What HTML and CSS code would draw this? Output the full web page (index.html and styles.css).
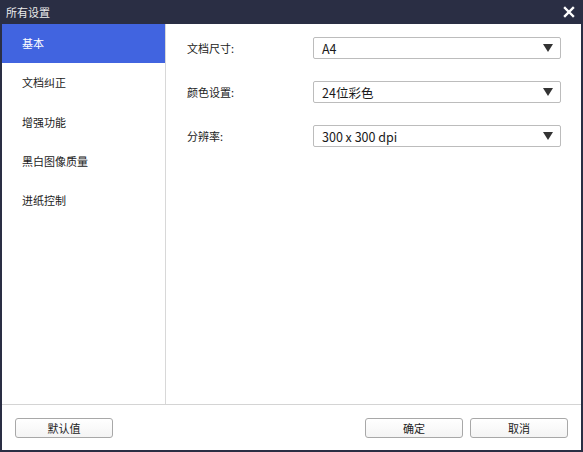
FILE: index.html
```html
<!DOCTYPE html>
<html lang="zh">
<head>
<meta charset="utf-8">
<title>所有设置</title>
<link rel="stylesheet" href="styles.css">
</head>
<body>
<div class="window">
  <div class="titlebar">
    <span class="title">所有设置</span>
    <svg class="close" width="12" height="12" viewBox="0 0 12 12"><path d="M2 2 L10 10 M10 2 L2 10" stroke="#ffffff" stroke-width="2.4" stroke-linecap="square"/></svg>
  </div>
  <div class="body">
    <div class="sidebar">
      <div class="item active">基本</div>
      <div class="item">文档纠正</div>
      <div class="item">增强功能</div>
      <div class="item">黑白图像质量</div>
      <div class="item">进纸控制</div>
    </div>
    <div class="main">
      <div class="row">
        <span class="label">文档尺寸:</span>
        <div class="select"><span>A4</span><span class="arrow"></span></div>
      </div>
      <div class="row">
        <span class="label">颜色设置:</span>
        <div class="select"><span>24位彩色</span><span class="arrow"></span></div>
      </div>
      <div class="row">
        <span class="label">分辨率:</span>
        <div class="select"><span>300 x 300 dpi</span><span class="arrow"></span></div>
      </div>
    </div>
  </div>
  <div class="footer">
    <button class="btn">默认值</button>
    <div class="spacer"></div>
    <button class="btn">确定</button>
    <button class="btn">取消</button>
  </div>
</div>
</body>
</html>
```
FILE: styles.css
```css
html, body {
  margin: 0;
  padding: 0;
  background: #ffffff;
}
body {
  font-family: "Noto Sans CJK SC", "Noto Sans", sans-serif;
  font-size: 11px;
  color: #222222;
}
.window {
  width: 583px;
  height: 452px;
  box-sizing: border-box;
  border: 2px solid #2a2e44;
  border-top: none;
  display: flex;
  flex-direction: column;
  background: #ffffff;
}
.titlebar {
  height: 24px;
  margin: 0 -2px;
  background: #2a2e44;
  display: flex;
  align-items: center;
  padding: 0 8px 0 6px;
  flex: none;
}
.title {
  color: #ececec;
  font-size: 11px;
  flex: 1;
}
.close {
  display: block;
}
.body {
  height: 380px;
  display: flex;
  border-bottom: 1px solid #d4d4d4;
  flex: none;
}
.sidebar {
  width: 163px;
  border-right: 1px solid #d8d8d8;
  flex: none;
}
.item {
  height: 39.3px;
  line-height: 39.3px;
  padding-left: 20px;
  color: #222222;
}
.item.active {
  background: #4164e0;
  color: #ffffff;
}
.main {
  flex: 1;
  padding: 13px 20px 0 21px;
  display: flex;
  flex-direction: column;
  gap: 22px;
}
.row {
  display: flex;
  align-items: center;
  height: 22px;
}
.label {
  width: 126px;
  flex: none;
}
.select {
  flex: 1;
  height: 22px;
  box-sizing: border-box;
  border: 1px solid #bcbcbc;
  border-radius: 2px;
  display: flex;
  align-items: center;
  justify-content: space-between;
  padding: 0 7px 0 8px;
  font-size: 12.5px;
  color: #1a1a1a;
}
.arrow {
  width: 0;
  height: 0;
  border-left: 5px solid transparent;
  border-right: 5px solid transparent;
  border-top: 8px solid #333333;
}
.footer {
  flex: 1;
  display: flex;
  align-items: flex-start;
  padding: 13px 13px 0 13px;
  gap: 7px;
}
.spacer {
  flex: 1;
}
.btn {
  width: 98px;
  height: 20px;
  box-sizing: border-box;
  border: 1px solid #a8a8a8;
  border-radius: 3px;
  background: linear-gradient(#ffffff, #f4f4f4);
  font-family: "Noto Sans CJK SC", "Noto Sans", sans-serif;
  font-size: 11px;
  color: #222222;
  padding: 0;
  line-height: 18px;
}
```
